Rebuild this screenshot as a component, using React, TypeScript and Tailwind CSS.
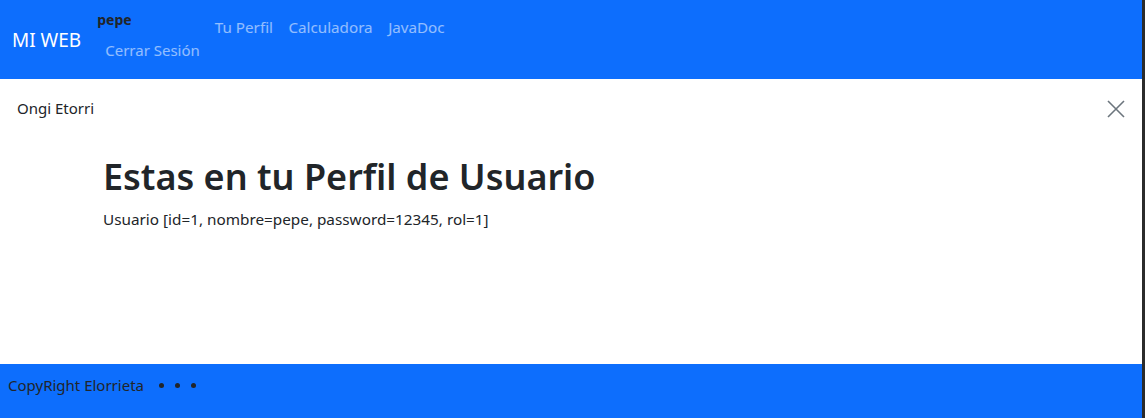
export default function App() {
  return (
    <div className="flex h-[418px] w-[1145px] bg-[#2b2b2b] font-['Noto_Sans',sans-serif] text-[#212529]">
      <div className="flex w-[1142px] flex-col bg-white">
        <nav className="flex h-[79px] items-start bg-[#0d6efd] pl-3">
          <a className="mt-[28px] text-[19px] leading-[24px] text-white">MI WEB</a>
          <div className="ml-4 flex flex-col">
            <span className="mt-[10px] text-[14px] font-bold leading-[20px] text-[#212529]">pepe</span>
            <a className="ml-2 mt-[9px] text-[15px] leading-[22px] text-white/55">Cerrar Sesión</a>
          </div>
          <ul className="ml-[15px] mt-[16px] flex gap-[15.5px] text-[15.2px] leading-[22px] text-white/55">
            <li>Tu Perfil</li>
            <li>Calculadora</li>
            <li>JavaDoc</li>
          </ul>
        </nav>

        <main className="flex-1">
          <div className="flex items-center justify-between pl-[17px] pr-[17px]">
            <span className="mt-[18px] text-[15px] leading-[22px]">Ongi Etorri</span>
            <button className="mt-[19px] text-[#6c757d]">
              <svg width="18" height="18" viewBox="0 0 18 18" fill="none" stroke="currentColor" strokeWidth="1.6">
                <path d="M1 1L17 17M17 1L1 17" />
              </svg>
            </button>
          </div>
          <div className="pl-[103px] pt-[34px]">
            <h1 className="text-[36px] font-semibold leading-[47px]">Estas en tu Perfil de Usuario</h1>
            <p className="mt-[8px] text-[15.3px] leading-[22px]">Usuario [id=1, nombre=pepe, password=12345, rol=1]</p>
          </div>
        </main>

        <footer className="flex h-[54px] items-start bg-[#0d6efd] pl-2 pt-[10px]">
          <span className="text-[15px] leading-[22px] text-[#212529]">CopyRight Elorrieta</span>
          <div className="ml-[15px] mt-[9px] flex gap-[11px]">
            <span className="h-[5px] w-[5px] rounded-full bg-[#212529]" />
            <span className="h-[5px] w-[5px] rounded-full bg-[#212529]" />
            <span className="h-[5px] w-[5px] rounded-full bg-[#212529]" />
          </div>
        </footer>
      </div>
    </div>
  );
}
